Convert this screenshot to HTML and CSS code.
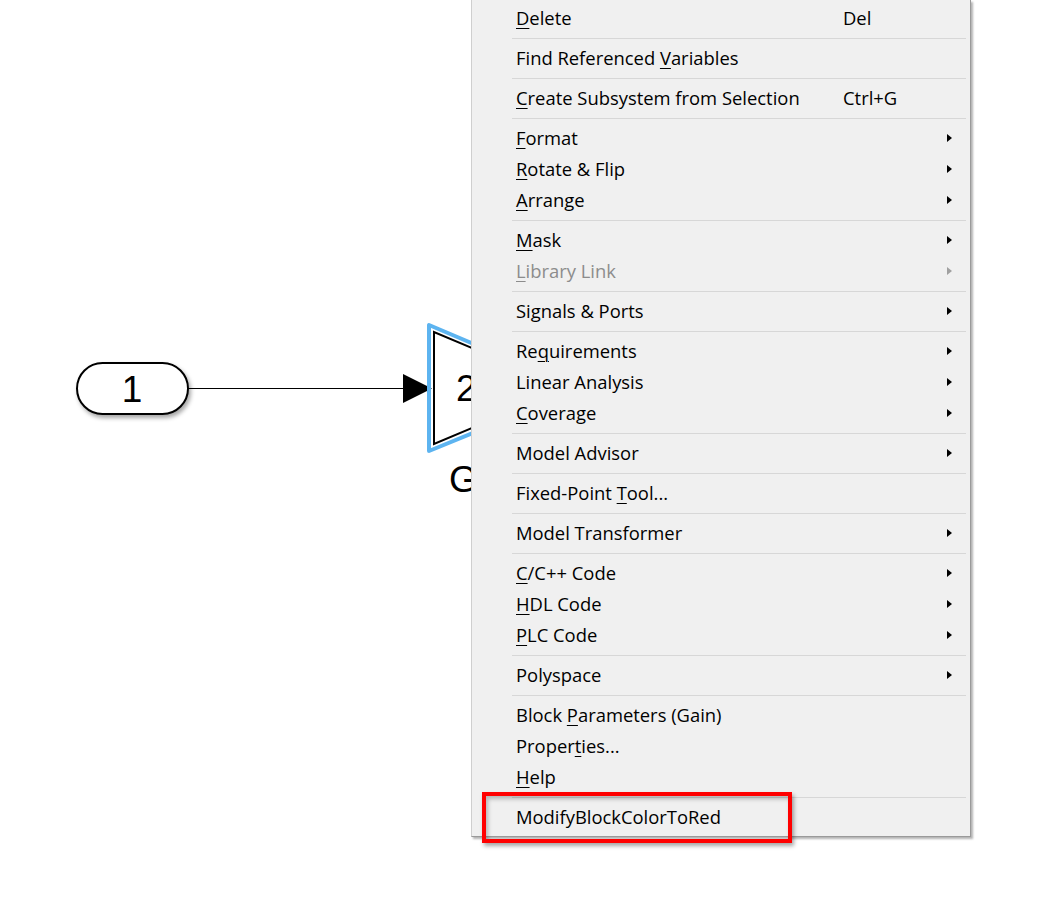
FILE: index.html
```html
<!DOCTYPE html>
<html lang="en">
  <head>
    <meta charset="UTF-8" />
    <title>Block context menu</title>
    <link rel="stylesheet" href="styles.css">
  </head>
  <body>
    <div class="canvas">
      <!-- Model diagram -->
      <svg class="diagram" width="1064" height="919" viewBox="0 0 1064 919">
        <defs>
          <filter id="blockShadow" x="-20%" y="-20%" width="140%" height="160%">
            <feDropShadow dx="2" dy="3" stdDeviation="2" flood-color="#000" flood-opacity="0.35" />
          </filter>
        </defs>
        <rect x="77" y="363" width="111" height="51" rx="25.5" ry="25.5" fill="#fff" stroke="#000" stroke-width="2" filter="url(#blockShadow)" />
        <text x="132" y="402" class="block-text" text-anchor="middle">1</text>
        <line x1="189" y1="388.5" x2="406" y2="388.5" stroke="#000" stroke-width="1" />
        <polygon points="403,374 432,388.5 403,403" fill="#000" />
        <polygon points="429,325 429,451 580,389" fill="none" stroke="#5db4f0" stroke-width="4" stroke-linejoin="round" />
        <polygon points="434,332 434,444 567,388" fill="#fff" stroke="#000" stroke-width="2" />
        <text x="456" y="401" class="block-text">2</text>
        <text x="449" y="492" class="block-text">Gain</text>
      </svg>

      <!-- Context menu -->
      <div class="menu">
        <div class="item"><span class="label"><u>D</u>elete</span><span class="key">Del</span></div>
        <div class="sep"></div>
        <div class="item"><span class="label">Find Referenced <u>V</u>ariables</span></div>
        <div class="sep"></div>
        <div class="item"><span class="label"><u>C</u>reate Subsystem from Selection</span><span class="key">Ctrl+G</span></div>
        <div class="sep"></div>
        <div class="item sub"><span class="label"><u>F</u>ormat</span></div>
        <div class="item sub"><span class="label"><u>R</u>otate &amp; Flip</span></div>
        <div class="item sub"><span class="label"><u>A</u>rrange</span></div>
        <div class="sep"></div>
        <div class="item sub"><span class="label"><u>M</u>ask</span></div>
        <div class="item sub disabled"><span class="label"><u>L</u>ibrary Link</span></div>
        <div class="sep"></div>
        <div class="item sub"><span class="label">Signals &amp; Ports</span></div>
        <div class="sep"></div>
        <div class="item sub"><span class="label">Re<u>q</u>uirements</span></div>
        <div class="item sub"><span class="label">Linear Analysis</span></div>
        <div class="item sub"><span class="label"><u>C</u>overage</span></div>
        <div class="sep"></div>
        <div class="item sub"><span class="label">Model Advisor</span></div>
        <div class="sep"></div>
        <div class="item"><span class="label">Fixed-Point <u>T</u>ool...</span></div>
        <div class="sep"></div>
        <div class="item sub"><span class="label">Model Transformer</span></div>
        <div class="sep"></div>
        <div class="item sub"><span class="label"><u>C</u>/C++ Code</span></div>
        <div class="item sub"><span class="label"><u>H</u>DL Code</span></div>
        <div class="item sub"><span class="label"><u>P</u>LC Code</span></div>
        <div class="sep"></div>
        <div class="item sub"><span class="label">Polyspace</span></div>
        <div class="sep"></div>
        <div class="item"><span class="label">Block <u>P</u>arameters (Gain)</span></div>
        <div class="item"><span class="label">Proper<u>t</u>ies...</span></div>
        <div class="item"><span class="label"><u>H</u>elp</span></div>
        <div class="sep"></div>
        <div class="item"><span class="label">ModifyBlockColorToRed</span></div>
      </div>

      <!-- Highlight around the custom entry -->
      <div class="callout"></div>
    </div>
  </body>
</html>
```

FILE: styles.css
```css
:root {
  --menu-bg: #f0f0f0;
  --sep: #d7d7d7;
  --text: #000;
  --disabled: #8c8c8c;
}

* {
  box-sizing: border-box;
}

body {
  margin: 0;
  background: #fff;
  font-family: "Open Sans", "Noto Sans", sans-serif;
}

.canvas {
  position: relative;
  width: 1064px;
  height: 919px;
  overflow: hidden;
  background: #fff;
}

.diagram {
  display: block;
}

.block-text {
  font-family: "Liberation Sans", Arial, sans-serif;
  font-size: 37px;
  fill: #000;
}

.menu {
  position: absolute;
  left: 471px;
  top: 0;
  width: 500px;
  padding: 2px 0 4px 1px;
  background: var(--menu-bg);
  border: 1px solid #cfcfcf;
  border-top: 0;
  border-right-color: #9a9a9a;
  border-bottom-color: #9a9a9a;
  box-shadow: 2px 2px 2px rgba(0, 0, 0, 0.3);
  color: var(--text);
  font-size: 18.4px;
}

.item {
  display: flex;
  align-items: center;
  height: 31px;
  padding-left: 43px;
  padding-right: 18px;
  white-space: nowrap;
}

.item .label {
  width: 327px;
}

.item .key {
  flex: 1;
}

.item u {
  text-decoration-thickness: 1px;
  text-underline-offset: 3px;
}

.item.sub::after {
  content: "";
  margin-left: auto;
  border-left: 5px solid #000;
  border-top: 4px solid transparent;
  border-bottom: 4px solid transparent;
}

.item.disabled {
  color: var(--disabled);
}

.item.disabled::after {
  border-left-color: #a0a0a0;
}

.sep {
  height: 9px;
  display: flex;
  align-items: flex-start;
  padding-top: 5px;
  margin: 0 4px 0 39px;
}

.sep::after {
  content: "";
  flex: 1;
  height: 1px;
  background: var(--sep);
}

.callout {
  position: absolute;
  left: 482px;
  top: 792px;
  width: 310px;
  height: 51px;
  border: 4px solid #f00;
  box-shadow: 2px 3px 4px rgba(0, 0, 0, 0.35), inset 2px 3px 4px rgba(0, 0, 0, 0.25);
}
```
